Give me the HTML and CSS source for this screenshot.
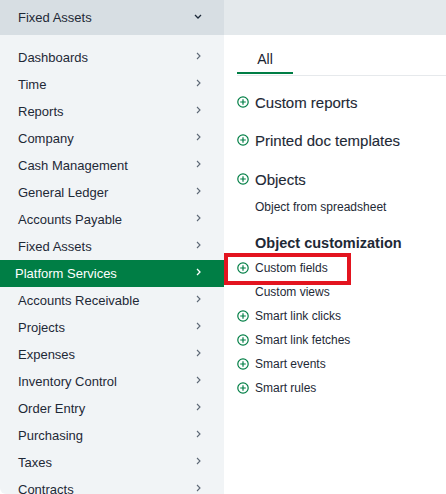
FILE: index.html
```html
<!DOCTYPE html>
<html>
<head>
<meta charset="utf-8">
<link rel="stylesheet" href="styles.css">
</head>
<body>
<div class="page">
  <div class="topbar">
    <div class="top-left">
      <span>Fixed Assets</span>
      <svg class="chev-down" width="8" height="5" viewBox="0 0 8 5"><polyline points="1,1 4,4 7,1" fill="none" stroke="#1d2a3a" stroke-width="1.3"/></svg>
    </div>
    <div class="top-right"></div>
  </div>
  <div class="main">
    <ul class="menu">
      <li><span>Dashboards</span><svg class="chev" width="5" height="8" viewBox="0 0 5 8"><polyline points="1,1 4,4 1,7" fill="none" stroke="#5d6875" stroke-width="1.1"/></svg></li>
      <li><span>Time</span><svg class="chev" width="5" height="8" viewBox="0 0 5 8"><polyline points="1,1 4,4 1,7" fill="none" stroke="#5d6875" stroke-width="1.1"/></svg></li>
      <li><span>Reports</span><svg class="chev" width="5" height="8" viewBox="0 0 5 8"><polyline points="1,1 4,4 1,7" fill="none" stroke="#5d6875" stroke-width="1.1"/></svg></li>
      <li><span>Company</span><svg class="chev" width="5" height="8" viewBox="0 0 5 8"><polyline points="1,1 4,4 1,7" fill="none" stroke="#5d6875" stroke-width="1.1"/></svg></li>
      <li><span>Cash Management</span><svg class="chev" width="5" height="8" viewBox="0 0 5 8"><polyline points="1,1 4,4 1,7" fill="none" stroke="#5d6875" stroke-width="1.1"/></svg></li>
      <li><span>General Ledger</span><svg class="chev" width="5" height="8" viewBox="0 0 5 8"><polyline points="1,1 4,4 1,7" fill="none" stroke="#5d6875" stroke-width="1.1"/></svg></li>
      <li><span>Accounts Payable</span><svg class="chev" width="5" height="8" viewBox="0 0 5 8"><polyline points="1,1 4,4 1,7" fill="none" stroke="#5d6875" stroke-width="1.1"/></svg></li>
      <li><span>Fixed Assets</span><svg class="chev" width="5" height="8" viewBox="0 0 5 8"><polyline points="1,1 4,4 1,7" fill="none" stroke="#5d6875" stroke-width="1.1"/></svg></li>
      <li class="active"><span>Platform Services</span><svg class="chev" width="5" height="8" viewBox="0 0 5 8"><polyline points="1,1 4,4 1,7" fill="none" stroke="#ffffff" stroke-width="1.3"/></svg></li>
      <li><span>Accounts Receivable</span><svg class="chev" width="5" height="8" viewBox="0 0 5 8"><polyline points="1,1 4,4 1,7" fill="none" stroke="#5d6875" stroke-width="1.1"/></svg></li>
      <li><span>Projects</span><svg class="chev" width="5" height="8" viewBox="0 0 5 8"><polyline points="1,1 4,4 1,7" fill="none" stroke="#5d6875" stroke-width="1.1"/></svg></li>
      <li><span>Expenses</span><svg class="chev" width="5" height="8" viewBox="0 0 5 8"><polyline points="1,1 4,4 1,7" fill="none" stroke="#5d6875" stroke-width="1.1"/></svg></li>
      <li><span>Inventory Control</span><svg class="chev" width="5" height="8" viewBox="0 0 5 8"><polyline points="1,1 4,4 1,7" fill="none" stroke="#5d6875" stroke-width="1.1"/></svg></li>
      <li><span>Order Entry</span><svg class="chev" width="5" height="8" viewBox="0 0 5 8"><polyline points="1,1 4,4 1,7" fill="none" stroke="#5d6875" stroke-width="1.1"/></svg></li>
      <li><span>Purchasing</span><svg class="chev" width="5" height="8" viewBox="0 0 5 8"><polyline points="1,1 4,4 1,7" fill="none" stroke="#5d6875" stroke-width="1.1"/></svg></li>
      <li><span>Taxes</span><svg class="chev" width="5" height="8" viewBox="0 0 5 8"><polyline points="1,1 4,4 1,7" fill="none" stroke="#5d6875" stroke-width="1.1"/></svg></li>
      <li><span>Contracts</span><svg class="chev" width="5" height="8" viewBox="0 0 5 8"><polyline points="1,1 4,4 1,7" fill="none" stroke="#5d6875" stroke-width="1.1"/></svg></li>
    </ul>
    <div class="panel">
      <div class="tabs">
        <div class="tab">All</div>
      </div>
      <div class="content">
        <div class="head h1"><svg class="plus" width="12" height="12" viewBox="0 0 12 12"><circle cx="6" cy="6" r="5.2" fill="none" stroke="#007e45" stroke-width="1.2"/><path d="M6 3.2V8.8M3.2 6H8.8" stroke="#007e45" stroke-width="1.2"/></svg><span>Custom reports</span></div>
        <div class="head h2"><svg class="plus" width="12" height="12" viewBox="0 0 12 12"><circle cx="6" cy="6" r="5.2" fill="none" stroke="#007e45" stroke-width="1.2"/><path d="M6 3.2V8.8M3.2 6H8.8" stroke="#007e45" stroke-width="1.2"/></svg><span>Printed doc templates</span></div>
        <div class="head h3"><svg class="plus" width="12" height="12" viewBox="0 0 12 12"><circle cx="6" cy="6" r="5.2" fill="none" stroke="#007e45" stroke-width="1.2"/><path d="M6 3.2V8.8M3.2 6H8.8" stroke="#007e45" stroke-width="1.2"/></svg><span>Objects</span></div>
        <div class="item sub spreadsheet"><span>Object from spreadsheet</span></div>
        <div class="head h4 bold"><span>Object customization</span></div>
        <div class="item first"><svg class="plus" width="12" height="12" viewBox="0 0 12 12"><circle cx="6" cy="6" r="5.2" fill="none" stroke="#007e45" stroke-width="1.2"/><path d="M6 3.2V8.8M3.2 6H8.8" stroke="#007e45" stroke-width="1.2"/></svg><span>Custom fields</span><div class="redbox"></div></div>
        <div class="item sub"><span>Custom views</span></div>
        <div class="item"><svg class="plus" width="12" height="12" viewBox="0 0 12 12"><circle cx="6" cy="6" r="5.2" fill="none" stroke="#007e45" stroke-width="1.2"/><path d="M6 3.2V8.8M3.2 6H8.8" stroke="#007e45" stroke-width="1.2"/></svg><span>Smart link clicks</span></div>
        <div class="item"><svg class="plus" width="12" height="12" viewBox="0 0 12 12"><circle cx="6" cy="6" r="5.2" fill="none" stroke="#007e45" stroke-width="1.2"/><path d="M6 3.2V8.8M3.2 6H8.8" stroke="#007e45" stroke-width="1.2"/></svg><span>Smart link fetches</span></div>
        <div class="item"><svg class="plus" width="12" height="12" viewBox="0 0 12 12"><circle cx="6" cy="6" r="5.2" fill="none" stroke="#007e45" stroke-width="1.2"/><path d="M6 3.2V8.8M3.2 6H8.8" stroke="#007e45" stroke-width="1.2"/></svg><span>Smart events</span></div>
        <div class="item"><svg class="plus" width="12" height="12" viewBox="0 0 12 12"><circle cx="6" cy="6" r="5.2" fill="none" stroke="#007e45" stroke-width="1.2"/><path d="M6 3.2V8.8M3.2 6H8.8" stroke="#007e45" stroke-width="1.2"/></svg><span>Smart rules</span></div>
      </div>
    </div>
  </div>
</div>
</body>
</html>
```
FILE: styles.css
```css
html, body {
  margin: 0;
  padding: 0;
  width: 446px;
  height: 494px;
  overflow: hidden;
  background: #ffffff;
  font-family: "Liberation Sans", Arial, sans-serif;
  color: #1e2936;
}
.page {
  width: 446px;
  height: 494px;
  display: flex;
  flex-direction: column;
}
.topbar {
  height: 35px;
  display: flex;
  flex-shrink: 0;
}
.top-left {
  width: 224px;
  background: #d7dee3;
  display: flex;
  align-items: center;
  justify-content: space-between;
  padding: 0 22px 0 18px;
  box-sizing: border-box;
  font-size: 13px;
}
.chev-down { margin-top: -2px; }
.top-right {
  flex: 1;
  background: #e4e9ec;
}
.main {
  flex: 1;
  display: flex;
  min-height: 0;
}
.menu {
  list-style: none;
  margin: 0;
  padding: 9px 0 0 0;
  width: 224px;
  background: #f1f4f6;
  flex-shrink: 0;
  border-bottom-left-radius: 6px;
}
.menu li {
  height: 27px;
  display: flex;
  align-items: center;
  justify-content: space-between;
  padding: 0 23px 0 18px;
  font-size: 13px;
  box-sizing: border-box;
}
.menu li .chev { margin-top: -3px; }
.menu li.active {
  background: #007e45;
  color: #ffffff;
  padding-left: 15px;
}
.panel {
  flex: 1;
  padding: 0 0 0 13px;
}
.tabs {
  margin-top: 13px;
  height: 27px;
  border-bottom: 1px solid #e6e9ec;
  display: flex;
}
.tab {
  width: 56px;
  text-align: center;
  font-size: 14px;
  line-height: 22px;
  border-bottom: 2px solid #007e45;
  margin-bottom: -1px;
  height: 26px;
  box-sizing: border-box;
  color: #1a2330;
}
.content {
  padding-top: 16px;
}
.head {
  display: flex;
  align-items: center;
  font-size: 15px;
  height: 20px;
  color: #1e2936;
  -webkit-text-stroke: 0.12px #1e2936;
}
.head .plus, .item .plus {
  margin-right: 6px;
  flex-shrink: 0;
}
.head.h2 { margin-top: 18px; }
.head.h3 { margin-top: 19px; }
.head.h4 { margin-top: 14px; padding-left: 18px; }
.head.bold { font-weight: bold; -webkit-text-stroke: 0; font-size: 14.5px; }
.item {
  display: flex;
  align-items: center;
  font-size: 12px;
  height: 24px;
  color: #1e2936;
  position: relative;
}
.item.sub { padding-left: 18px; }
.item.spreadsheet { margin-top: 6px; }
.item.first { margin-top: 3px; }
.redbox {
  position: absolute;
  left: -13px;
  top: -3px;
  width: 127px;
  height: 32px;
  border: 4px solid #e3141f;
  box-sizing: border-box;
}
```
